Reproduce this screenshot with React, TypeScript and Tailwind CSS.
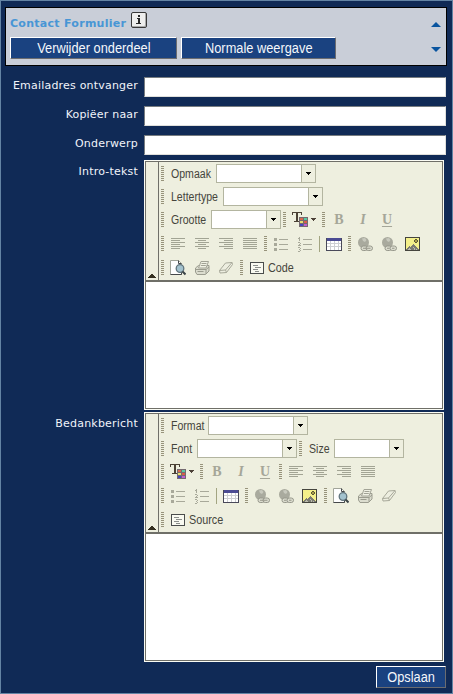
import React from "react";

const ui = "font-['Liberation_Sans',Arial,sans-serif]";
const verdana = "font-['DejaVu_Sans',Verdana,sans-serif]";

/* ---------- toolbar primitives ---------- */

function Slot({ children }: { children: React.ReactNode }) {
  return <div className="flex h-4 w-6 shrink-0 items-center justify-center">{children}</div>;
}

function Icon({ children, smooth }: { children: React.ReactNode; smooth?: boolean }) {
  return (
    <svg
      className="block h-4 w-4 shrink-0"
      viewBox="0 0 16 16"
      fill="none"
      shapeRendering={smooth ? "auto" : "crispEdges"}
    >
      {children}
    </svg>
  );
}

function Handle() {
  return (
    <div className="shrink-0 px-[2px]">
      <svg className="block h-[15px] w-[3px]" viewBox="0 0 3 15" shapeRendering="crispEdges">
        {[0, 2, 4, 6, 8, 10, 12, 14].map((y) => (
          <rect key={y} x="0" y={y} width="3" height="1" fill="#97937b" />
        ))}
      </svg>
    </div>
  );
}

function Separator() {
  return <div className="mx-[2px] h-4 w-px shrink-0 bg-[#a3a582]" />;
}

function Triangle() {
  return (
    <svg className="block h-[3px] w-[5px]" viewBox="0 0 5 3" shapeRendering="crispEdges">
      <path d="M0 0h5v1H0zM1 1h3v1H1zM2 2h1v1H2z" fill="#000" />
    </svg>
  );
}

function Combo({ label, labelWidth, width }: { label: string; labelWidth: string; width: string }) {
  return (
    <div className="flex shrink-0 items-center pl-[5px]">
      <div className={`${labelWidth} ${ui} mr-[5px] text-[12px] leading-4 text-[#45453c]`}>
        <span className="inline-block origin-left scale-x-[0.88] whitespace-nowrap">{label}</span>
      </div>
      <div className={`${width} flex h-[19px] border border-[#b3b5a0] bg-white`}>
        <div className="ml-auto flex w-[14px] items-center justify-center border-l border-[#b3b5a0] bg-[#eeefdf]">
          <Triangle />
        </div>
      </div>
    </div>
  );
}

/* ---------- toolbar icons ---------- */

function TextColor() {
  return (
    <div className="flex h-4 w-8 shrink-0 items-center pl-1">
      <Icon>
        <path d="M0 0h10v3H9V1H6v8h2v1H2V9h2V1H1v2H0z" fill="#4b4236" />
        <rect x="7" y="5" width="9" height="10" fill="#756a70" />
        <rect x="8" y="6" width="3" height="2" fill="#d66a50" />
        <rect x="12" y="6" width="3" height="2" fill="#58c9a2" />
        <rect x="8" y="9" width="3" height="2" fill="#e5df70" />
        <rect x="12" y="9" width="3" height="2" fill="#d95b49" />
        <rect x="8" y="12" width="3" height="2" fill="#4646bb" />
        <rect x="12" y="12" width="3" height="2" fill="#c05bd0" />
      </Icon>
      <svg className="ml-[3px] block h-[3px] w-[5px]" viewBox="0 0 5 3" shapeRendering="crispEdges">
        <path d="M0 0h5v1H0zM1 1h3v1H1zM2 2h1v1H2z" fill="#4d4238" />
      </svg>
    </div>
  );
}

function Letter({ children, className }: { children: string; className: string }) {
  return (
    <Slot>
      <span
        className={`font-['Liberation_Serif','Times_New_Roman',serif] text-[14px] leading-4 font-bold text-[#a5a698] ${className}`}
      >
        {children}
      </span>
    </Slot>
  );
}

function Styles() {
  return (
    <>
      <Letter className="">B</Letter>
      <Letter className="italic">I</Letter>
      <Letter className="underline decoration-1 underline-offset-2">U</Letter>
    </>
  );
}

const alignPaths = [
  "M1 2h14M1 4h9M1 6h14M1 8h9M1 10h14M1 12h9",
  "M1 2h14M4 4h8M1 6h14M4 8h8M1 10h14M4 12h8",
  "M1 2h14M6 4h9M1 6h14M6 8h9M1 10h14M6 12h9",
  "M1 2h14M1 4h14M1 6h14M1 8h14M1 10h14M1 12h14",
];

function Alignment() {
  return (
    <>
      {alignPaths.map((d) => (
        <Slot key={d}>
          <Icon>
            <path d={d} transform="translate(0 .5)" stroke="#a2a494" />
          </Icon>
        </Slot>
      ))}
    </>
  );
}

function Lists() {
  return (
    <>
      <Slot>
        <Icon>
          <path d="M1 2h3v3H1zM1 7h3v3H1zM1 12h3v3H1z" fill="#a8a99a" />
          <path d="M6 3.5h9M6 8.5h9M6 13.5h9" stroke="#a8a99a" />
        </Icon>
      </Slot>
      <Slot>
        <Icon>
          <path
            d="M2 1h1v4H2zM1 2h1v1H1zM1 6h2v1H1zM3 7h1v1H3zM2 8h1v1H2zM1 9h3v1H1zM1 11h2v1H1zM3 12h1v1H3zM2 13h1v1H2zM3 14h1v1H3zM1 15h2v1H1z"
            fill="#a8a99a"
          />
          <path d="M6 3.5h9M6 8.5h9M6 13.5h9" stroke="#a8a99a" />
        </Icon>
      </Slot>
    </>
  );
}

function Table() {
  return (
    <Slot>
      <Icon>
        <rect x="0" y="2" width="16" height="13" fill="#49495a" />
        <rect x="1" y="2" width="14" height="3" fill="#4b4b93" />
        <rect x="1" y="5" width="14" height="9" fill="#cdcfd2" />
        <path d="M1 5h3v2H1zm4 0h3v2H5zm4 0h3v2H9zm4 0h2v2h-2zM1 8h3v2H1zm4 0h3v2H5zm4 0h3v2H9zm4 0h2v2h-2zM1 11h3v3H1zm4 0h3v3H5zm4 0h3v3H9zm4 0h2v3h-2z" fill="#fff" />
      </Icon>
    </Slot>
  );
}

function Globe({ broken }: { broken?: boolean }) {
  return (
    <Slot>
      <Icon smooth>
        <circle cx="6.5" cy="6.5" r="5.5" fill="#a9aa9e" />
        <path d="M5 2.500L8 2l1.500 2L8 6 6 5z" fill="#c8c9be" />
        <rect x="4" y="10" width="6.5" height="4.500" rx="2.200" fill="#dcddcf" stroke="#96978b" />
        <rect x="9" y="10" width="6.5" height="4.500" rx="2.200" fill="#dcddcf" stroke="#96978b" />
        {broken ? (
          <path d="M6 12.250h2.500M11 12.250h2.500" stroke="#96978b" />
        ) : (
          <path d="M6 12.250h7.500" stroke="#96978b" />
        )}
      </Icon>
    </Slot>
  );
}

function Links() {
  return (
    <>
      <Globe />
      <Globe broken />
    </>
  );
}

function Picture() {
  return (
    <Slot>
      <Icon>
        <rect x="0" y="1" width="15" height="14" fill="#45453e" />
        <rect x="1" y="2" width="13" height="12" fill="#f4f08a" />
        <path
          d="M1 13h1v-1h1v-1h1v-1h1v1h1v-1h1V9h1V8h1v1h1v1h1v1h1v1h1v1h1v1H1z"
          fill="#7b7b72"
        />
        <path d="M3 13h1v-1h1v1h1v1H3zM8 11h1v1h1v2H9v-2H8zM11 13h1v1h-1z" fill="#bcbcae" />
        <path d="M10 3h2v1h1v2h-1v1h-2V6H9V4h1z" fill="#5c5736" />
        <rect x="10" y="4" width="2" height="2" fill="#a89e48" />
      </Icon>
    </Slot>
  );
}

function FileTools() {
  return (
    <>
      <Slot>
        <Icon smooth>
          <path d="M.5.5h8l3 3v11H.5z" fill="#fff" stroke="#a2a59a" />
          <path d="M8.500.5v3h3M.5 14.500h11V12" stroke="#45484a" />
          <circle cx="10" cy="8.500" r="3.800" fill="#a3c2ce" stroke="#61747d" strokeWidth="1.300" />
          <path d="M12.500 11.500l3 3" stroke="#3c4548" strokeWidth="2" />
        </Icon>
      </Slot>
      <Slot>
        <Icon smooth>
          <path d="M1.500 8l3-2.500h10.500v5.500l-3.500 3.500H3L1.500 12z" fill="#dcddcf" stroke="#9b9c8f" />
          <path d="M4.500 8l2.500-6.500h7.500L12 8z" fill="#f0f1e4" stroke="#a2a396" />
          <path d="M7.500 3.500h5M6.800 5.500h5" stroke="#a2a396" />
          <path d="M1.500 9.500h10.500l3-2.500M12 9.500v4.500M3.500 11.500h6" stroke="#9b9c8f" />
        </Icon>
      </Slot>
      <Slot>
        <Icon smooth>
          <path d="M1.500 10.500l6-7.500 6.500-.5.500 2-6 8-6.500.5z" fill="#edeee0" stroke="#a8a99a" />
          <path d="M1.500 10.500l6-.5 6.500-7.500M7.500 10l1 2.500" stroke="#a8a99a" />
        </Icon>
      </Slot>
    </>
  );
}

function Source({ label }: { label: string }) {
  return (
    <div className={`flex items-center pl-1 text-[12px] leading-4 text-[#45453c] ${ui}`}>
      <Icon>
        <rect x="1.500" y="2.500" width="13" height="11" fill="#f9faf1" stroke="#4a4d4c" />
        <path d="M4 5.500h5M6 7.500h6M4 9.500h5M6 11.500h4" stroke="#8b8e8b" />
      </Icon>
      <span className="ml-[3px] inline-block origin-left scale-x-[0.9]">{label}</span>
    </div>
  );
}

/* ---------- editor ---------- */

function Row({ children, tall }: { children: React.ReactNode; tall?: boolean }) {
  return (
    <div className={`flex shrink-0 items-center ${tall ? "h-[25px]" : "h-[23px]"}`}>
      <Handle />
      {children}
    </div>
  );
}

function Editor({ children }: { children: React.ReactNode }) {
  return (
    <div className="h-[250px] w-[300px] border border-[#fbfcf4] bg-white">
      <div className="flex h-full flex-col border border-[#6f6f68]">
        <div className="flex h-[120px] shrink-0 border-b-2 border-[#6f6f68] bg-[#eeefdf]">
          <div className="flex w-[13px] shrink-0 items-end justify-center border-r border-[#6f6f68] pb-[2px]">
            <svg className="block h-1 w-2" viewBox="0 0 8 4" shapeRendering="crispEdges">
              <path d="M3 0h2v1H3zM2 1h4v1H2zM1 2h6v1H1zM0 3h8v1H0z" fill="#34301f" />
            </svg>
          </div>
          <div className="flex flex-col">{children}</div>
        </div>
      </div>
    </div>
  );
}

/* ---------- form ---------- */

function Field({ label }: { label: string }) {
  return (
    <div className={`mb-[9px] flex h-5 items-center text-[11px] text-[#f0f4fa] ${verdana}`}>
      <div className="mr-[6px] -mt-px w-[137px] text-right tracking-[0.2px] whitespace-nowrap">{label}</div>
      <div className="h-5 w-[302px] border border-t-[#777c80] border-l-[#777c80] border-r-[#e0e0dc] border-b-[#e0e0dc] bg-white" />
    </div>
  );
}

function EditorField({ label, children }: { label: string; children: React.ReactNode }) {
  return (
    <div className="mb-[2px] flex items-start">
      <div
        className={`mr-[6px] w-[137px] pt-[5px] text-right text-[11px] leading-[14px] tracking-[0.2px] text-[#f0f4fa] ${verdana}`}
      >
        {label}
      </div>
      <Editor>{children}</Editor>
    </div>
  );
}

function Button({ children, className }: { children: string; className: string }) {
  return (
    <button
      className={`flex h-[22px] items-center justify-center border border-t-white border-l-white border-r-[#6b6c70] border-b-[#6b6c70] bg-[#1a4280] text-[14px] leading-4 whitespace-nowrap text-[#f4f7fb] ${ui} ${className}`}
    >
      <span className="inline-block scale-x-[0.915]">{children}</span>
    </button>
  );
}

export default function App() {
  return (
    <div className="h-[694px] w-[453px] overflow-hidden border border-[#6484a4] bg-[#102a56]">
      <div className="mt-[6px] ml-1 flex h-[59px] w-[442px] justify-between border border-black bg-[#c9ced8]">
        <div className="pl-1">
          <div className="flex h-[29px] items-start pt-1">
            <h1 className={`mt-[4px] w-[121px] text-[11px] leading-4 font-bold tracking-[0.28px] whitespace-nowrap text-[#4896d5] ${verdana}`}>
              Contact Formulier
            </h1>
            <div className="flex h-4 w-4 items-center justify-center rounded-[2px] border border-[#383838] bg-[#eeeeed] shadow-[inset_-1px_-1px_0_#aaa]">
              <svg className="block h-[10px] w-[6px]" viewBox="0 0 6 10" shapeRendering="crispEdges">
                <path d="M2 0h2v2H2zM1 3h3v5h1v1H0V8h2V4H1z" fill="#292929" />
              </svg>
            </div>
          </div>
          <div className="flex gap-1">
            <Button className="w-[167px]">Verwijder onderdeel</Button>
            <Button className="w-[155px]">Normale weergave</Button>
          </div>
        </div>
        <div className="flex flex-col gap-[20px] pt-[14px] pr-[5px]">
          <svg className="block h-[5px] w-[10px]" viewBox="0 0 10 5">
            <path d="M5 0l5 5H0z" fill="#09549f" />
          </svg>
          <svg className="block h-[5px] w-[10px]" viewBox="0 0 10 5">
            <path d="M0 0h10L5 5z" fill="#09549f" />
          </svg>
        </div>
      </div>

      <div className="mt-[11px]">
        <Field label="Emailadres ontvanger" />
        <Field label="Kopiëer naar" />
        <Field label="Onderwerp" />
      </div>

      <div className="-mt-1">
        <EditorField label="Intro-tekst">
          <Row><Combo label="Opmaak" labelWidth="w-[40px]" width="w-[100px]" /></Row>
          <Row><Combo label="Lettertype" labelWidth="w-[47px]" width="w-[100px]" /></Row>
          <Row>
            <Combo label="Grootte" labelWidth="w-[35px]" width="w-[70px]" />
            <Handle />
            <TextColor />
            <Handle />
            <Styles />
          </Row>
          <Row tall>
            <Alignment />
            <Handle />
            <Lists />
            <Separator />
            <Table />
            <Handle />
            <Links />
            <Picture />
          </Row>
          <Row>
            <FileTools />
            <Handle />
            <Source label="Code" />
          </Row>
        </EditorField>
        <EditorField label="Bedankbericht">
          <Row><Combo label="Format" labelWidth="w-[32px]" width="w-[100px]" /></Row>
          <Row>
            <Combo label="Font" labelWidth="w-[21px]" width="w-[100px]" />
            <Handle />
            <Combo label="Size" labelWidth="w-[20px]" width="w-[70px]" />
          </Row>
          <Row>
            <TextColor />
            <Handle />
            <Styles />
            <Handle />
            <Alignment />
          </Row>
          <Row tall>
            <Lists />
            <Separator />
            <Table />
            <Handle />
            <Links />
            <Picture />
            <Handle />
            <FileTools />
          </Row>
          <Row><Source label="Source" /></Row>
        </EditorField>
      </div>
      <div className="mt-1 flex justify-end pr-[6px]">
        <Button className="w-[70px]">Opslaan</Button>
      </div>
    </div>
  );
}
